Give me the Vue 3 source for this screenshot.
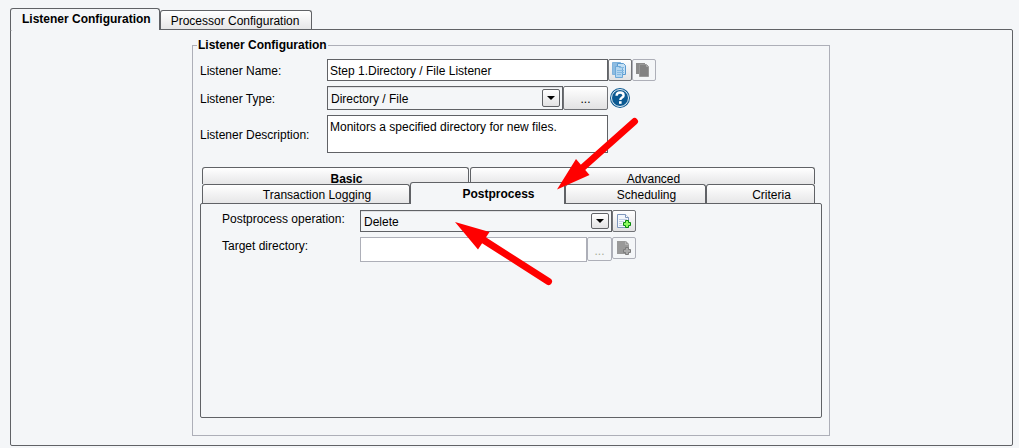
<script setup>
import { ref } from 'vue'

const mainTab = ref('listener')
const subTab = ref('post')
const name = ref('Step 1.Directory / File Listener')
const description = ref('Monitors a specified directory for new files.')
const type = ref('Directory / File')
const operation = ref('Delete')
const target = ref('')
</script>

<template>
  <main class="page">
    <div class="tabs" role="tablist">
      <button type="button" role="tab" class="tab main-tab" :class="{ active: mainTab === 'listener' }" :aria-selected="mainTab === 'listener'" @click="mainTab = 'listener'">Listener Configuration</button>
      <button type="button" role="tab" class="tab main-tab" :class="{ active: mainTab === 'processor' }" :aria-selected="mainTab === 'processor'" @click="mainTab = 'processor'">Processor Configuration</button>
    </div>

    <section class="panel main-panel">
      <fieldset class="group">
        <legend>Listener Configuration</legend>

        <div class="form">
          <label for="name">Listener Name:</label>
          <div class="controls">
            <input id="name" v-model="name" type="text" class="field">
            <button type="button" class="btn icon-btn" aria-label="Copy">
              <svg width="16" height="16" viewBox="0 0 16 16">
                <path d="M.5.5h8v12h-8z" fill="#8dbbe0" stroke="#7fb2dc" />
                <path d="M5.500 1.500h6l2 2v9h-8z" fill="#c5e0f4" stroke="#5b9bd0" />
                <path d="M3.500 4.500h5l2 2v9h-7z" fill="#b3d5ef" stroke="#6ca8d8" />
                <path d="M7 5.500h5M5 8.500h7M5 10.500h7M5 12.500h4" stroke="#84b8e0" />
              </svg>
            </button>
            <button type="button" class="btn icon-btn" disabled aria-label="Paste">
              <svg width="16" height="16" viewBox="0 0 16 16">
                <path d="M0 1h9v11H0z" fill="#8b8b8b" />
                <path d="M3.500 2.500h7l2 2v10h-9z" fill="#828282" stroke="#989898" />
                <path d="M10.500 2.500v2h2" fill="none" stroke="#a8a8a8" />
              </svg>
            </button>
          </div>

          <label for="type">Listener Type:</label>
          <div class="controls">
            <span class="combo type-combo">
              <select id="type" v-model="type"><option>Directory / File</option></select>
              <span class="arrow"><svg width="8" height="4" viewBox="0 0 8 4"><path d="M0 0h8L4 4z" /></svg></span>
            </span>
            <button type="button" class="btn more-btn">...</button>
            <button type="button" class="help" aria-label="Help">
              <svg width="20" height="20" viewBox="0 0 20 20">
                <circle cx="10" cy="10" r="10" fill="#0b5a92" />
                <circle cx="10" cy="10" r="8.500" fill="#0b5a92" stroke="#e8f1f7" />
                <path d="M6.600 7.800C6.600 5.400 8.200 4.500 10.100 4.500c2 0 3.500 1 3.500 2.900 0 2.200-3.300 2.200-3.300 4.700" fill="none" stroke="#fff" stroke-width="2.400" />
                <rect x="9" y="13.200" width="2.600" height="2.600" fill="#fff" />
              </svg>
            </button>
          </div>

          <label for="description">Listener Description:</label>
          <div class="controls">
            <textarea id="description" v-model="description" class="field"></textarea>
          </div>
        </div>

        <div class="subtabs" role="tablist">
          <div class="tab-row upper">
            <button type="button" role="tab" class="tab basic">Basic</button>
            <button type="button" role="tab" class="tab">Advanced</button>
          </div>
          <div class="tab-row lower">
            <button type="button" role="tab" class="tab" :class="{ active: subTab === 'log' }" @click="subTab = 'log'">Transaction Logging</button>
            <button type="button" role="tab" class="tab" :class="{ active: subTab === 'post' }" @click="subTab = 'post'">Postprocess</button>
            <button type="button" role="tab" class="tab" :class="{ active: subTab === 'sched' }" @click="subTab = 'sched'">Scheduling</button>
            <button type="button" role="tab" class="tab" :class="{ active: subTab === 'crit' }" @click="subTab = 'crit'">Criteria</button>
          </div>
        </div>

        <div class="panel sub-panel">
          <div class="form post-form">
            <label for="operation">Postprocess operation:</label>
            <div class="controls">
              <span class="combo">
                <select id="operation" v-model="operation"><option>Delete</option></select>
                <span class="arrow"><svg width="8" height="4" viewBox="0 0 8 4"><path d="M0 0h8L4 4z" /></svg></span>
              </span>
              <button type="button" class="btn icon-btn" aria-label="Add operation">
                <svg width="16" height="16" viewBox="0 0 16 16">
                  <path d="M1.500 1.500h8l3 3v10h-11z" fill="#f3f7fc" stroke="#7f97bd" />
                  <path d="M9.500 1.500v3h3" fill="#fff" stroke="#7f97bd" />
                  <path d="M3 6.500h8M3 8.500h5M3 10.500h3M3 12.500h4" stroke="#c3d0e4" />
                  <path d="M9.500 7.500h3v2h2v3h-2v2h-3v-2h-2v-3h2z" fill="#8dfa60" stroke="#078a0c" />
                </svg>
              </button>
            </div>

            <label for="target">Target directory:</label>
            <div class="controls">
              <input id="target" v-model="target" type="text" class="field" disabled>
              <button type="button" class="btn dots" disabled>...</button>
              <button type="button" class="btn icon-btn" disabled aria-label="Add directory">
                <svg width="16" height="16" viewBox="0 0 16 16">
                  <path d="M1 1h9l3 3v10H1z" fill="#999" />
                  <path d="M9.500 1.500v3h3" fill="none" stroke="#b5b5b5" />
                  <path d="M9.500 7.500h3v2h2v3h-2v2h-3v-2h-2v-3h2z" fill="#aaa" stroke="#7c7c7c" />
                </svg>
              </button>
            </div>
          </div>
        </div>

        <svg class="pointers" width="200" height="180" viewBox="440 110 200 180" aria-hidden="true">
          <g stroke="#f00" stroke-width="7" stroke-linecap="round" fill="#f00">
            <path d="M634.500 121.500L580 170M548.500 281.500L482 239" />
            <path stroke="none" d="M557 189.500L576 159l13.500 16zM455 222l34.500 10L478 249.500z" />
          </g>
        </svg>
      </fieldset>
    </section>
  </main>
</template>

<style>
body { margin: 0; background: #f4f6f8; }
</style>

<style scoped>
* { box-sizing: border-box; }
.page {
  display: flex;
  flex-direction: column;
  min-height: 100vh;
  padding: 8px 6px 2px 10px;
  background: #f4f6f8;
  color: #000;
  font: 12px/14px "Liberation Sans", Arial, sans-serif;
}
button, input, select, textarea { margin: 0; font: inherit; color: inherit; }
.tabs { display: flex; align-items: flex-end; }
.tab {
  border: 1px solid #606266;
  border-bottom: 0;
  border-radius: 3px 3px 0 0;
  background: linear-gradient(#fff, #e6e6e7);
  white-space: nowrap;
}
.tab.active {
  position: relative;
  z-index: 1;
  background: #f4f6f8;
  font-weight: bold;
}
.main-tab { height: 19px; padding: 1px 12px 0 10px; }
.main-tab.active { height: 22px; margin-bottom: -1px; padding: 0 8px 2px 11px; }
.panel { border: 1px solid #606266; border-radius: 2px; }
.main-panel {
  display: flex;
  flex: 1;
  justify-content: center;
  padding: 8px 1px 9px 0;
}
.group {
  position: relative;
  display: flex;
  flex-direction: column;
  width: 100%;
  max-width: 638px;
  min-width: 0;
  margin: 0;
  padding: 7px 7px 17px;
  border: 1px solid #adafb8;
}
legend { margin-left: -3px; padding: 0 1px; font-weight: bold; }
.form {
  display: grid;
  grid-template-columns: 127px 1fr;
  row-gap: 5px;
  align-items: center;
}
.form label { padding-top: 2px; }
.controls { display: flex; align-items: flex-start; }
.field {
  display: block;
  width: 281px;
  height: 22px;
  padding: 1px 2px 0;
  border: 1px solid #606266;
  border-radius: 0;
  background: #fff;
  outline: 0;
}
textarea.field { height: 38px; padding: 4px 2px; resize: none; overflow: hidden; }
.combo {
  display: grid;
  width: 252px;
  height: 22px;
  border: 1px solid #606266;
  align-items: center;
  box-shadow: inset 0 1px #dfe0e3;
}
.combo select {
  grid-area: 1 / 1;
  width: 100%;
  height: 100%;
  padding: 1px 24px 0 3px;
  border: 0;
  background: none;
  appearance: none;
  outline: 0;
}
.arrow {
  grid-area: 1 / 1;
  justify-self: end;
  display: flex;
  align-items: center;
  justify-content: center;
  width: 18px;
  height: 16px;
  margin-right: 2px;
  border: 1px solid #606266;
  border-radius: 2px;
  background: linear-gradient(#fff, #e2e2e3);
  pointer-events: none;
}
.type-combo { width: 236px; height: 24px; }
.type-combo .arrow { height: 18px; }
.btn {
  display: flex;
  align-items: center;
  justify-content: center;
  padding: 0;
  border: 1px solid #707276;
  border-radius: 2px;
  background: linear-gradient(#fff, #e2e2e3);
}
.btn:disabled { border-color: #adafb8; background: #f4f6f8; color: #a8b09a; }
.icon-btn { width: 24px; height: 22px; }
.more-btn { width: 45px; height: 24px; padding-top: 2px; }
.dots { width: 25px; height: 24px; padding-top: 4px; }
.help { display: flex; margin: 2px; padding: 0; border: 0; background: none; }
.subtabs { margin-top: 14px; padding: 0 7px 0 2px; }
.tab-row { display: grid; grid-template-rows: 100%; align-items: end; }
.tab-row .tab { min-width: 0; height: 100%; padding: 2px 0 0 22px; }
.upper { grid-template-columns: 267fr 345fr; column-gap: 1px; height: 17px; }
.upper .tab { padding-top: 4px; }
.lower { grid-template-columns: 208fr 155fr 141fr 109fr; height: 19px; }
.lower .tab.active { height: 22px; margin-bottom: -1px; padding: 0 0 0 22px; }
.basic { font-weight: bold; }
.sub-panel { flex: 1; padding: 6px 21px; }
.post-form { grid-template-columns: 138px 1fr; align-items: start; }
.post-form .field { width: 227px; height: 25px; }
.field:disabled { border-color: #adafb8; }
.pointers {
  position: absolute;
  top: 58px;
  left: 247px;
  pointer-events: none;
  z-index: 2;
}
</style>
